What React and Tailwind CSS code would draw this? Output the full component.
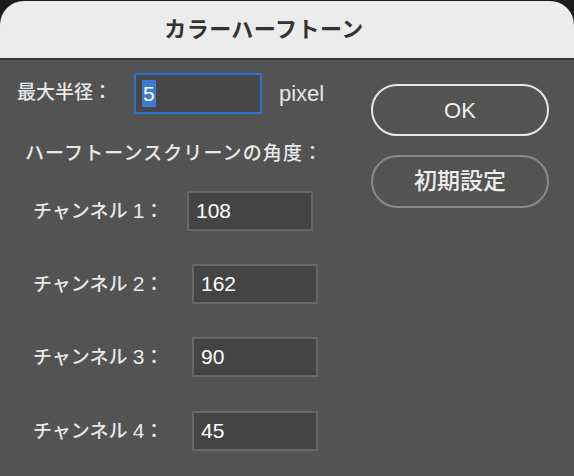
import React from 'react';

const channels = [
  { num: '1', value: '108', labelW: 'w-[154px]', gap: 'mt-[25px]' },
  { num: '2', value: '162', labelW: 'w-[159px]', gap: 'mt-[33px]' },
  { num: '3', value: '90', labelW: 'w-[159px]', gap: 'mt-[33px]' },
  { num: '4', value: '45', labelW: 'w-[159px]', gap: 'mt-[34px]' },
];

const font = { fontFamily: '"Liberation Sans", "Noto Sans CJK JP", sans-serif' };

export default function App() {
  return (
    <div className="w-[574px] h-[476px] bg-[#1c1c1c] overflow-hidden" style={font}>
      {/* Title bar */}
      <div className="h-[57px] mt-[1px] bg-[#ececec] rounded-t-[24px] flex items-center justify-center pr-[46px]">
        <span className="text-[22px] font-bold text-[#333333] tracking-[0.5px]">カラーハーフトーン</span>
      </div>
      <div className="h-[2px] bg-[#3a3a3a]"></div>

      {/* Body */}
      <div className="h-[416px] bg-[#535353] flex">
        <div className="flex-1 pl-[17px] pt-[13px] text-[#e8e8e8] font-medium">
          <div className="flex items-center">
            <span className="w-[117px] text-[19px]">最大半径：</span>
            <div className="w-[128px] h-[41px] border-2 border-[#2c72d2] bg-[#474747] flex items-center pl-[6px]">
              <span className="bg-[#3c7bd0] text-white text-[21px] leading-[27px] px-[1px]">5</span>
            </div>
            <span className="ml-[17px] text-[22px] text-[#e6e6e6]">pixel</span>
          </div>

          <div className="mt-[28px] pl-[8px] text-[19px] leading-[24px] tracking-[1.1px]">
            ハーフトーンスクリーンの角度：
          </div>

          {channels.map((c) => (
            <div key={c.num} className={`flex items-center h-[40px] pl-[16px] ${c.gap}`}>
              <span className={`${c.labelW} text-[19px]`}>
                チャンネル <span className="text-[21px]">{c.num}</span>：
              </span>
              <div className="w-[126px] h-[40px] border-2 border-[#676767] bg-[#444444] flex items-center pl-[7px]">
                <span className="text-white text-[21px]">{c.value}</span>
              </div>
            </div>
          ))}
        </div>

        <div className="w-[178px] mr-[25px] pt-[24px] flex flex-col gap-[19px]">
          <div className="h-[52px] rounded-full border-2 border-[#e6e6e6] flex items-center justify-center">
            <span className="text-[22px] text-[#f0f0f0] font-medium">OK</span>
          </div>
          <div className="h-[53px] rounded-full border-2 border-[#8a8a8a] flex items-center justify-center">
            <span className="text-[23px] text-[#ececec] font-medium">初期設定</span>
          </div>
        </div>
      </div>
    </div>
  );
}
